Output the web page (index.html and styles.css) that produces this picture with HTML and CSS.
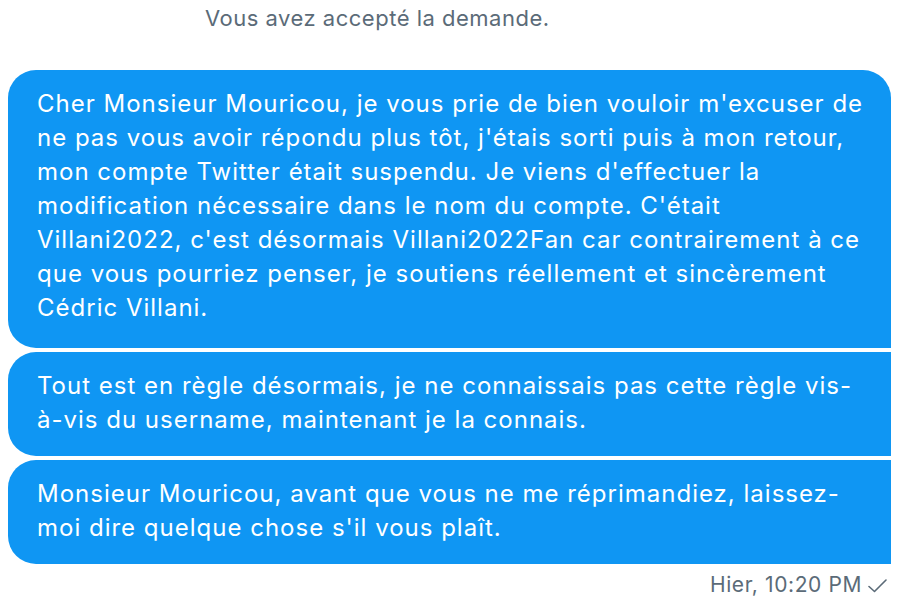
FILE: index.html
```html
<!DOCTYPE html>
<html lang="fr">

<head>
    <meta charset="UTF-8">
    <meta name="viewport" content="width=device-width, initial-scale=1.0">
    <title>Messages</title>
    <link rel="stylesheet" href="styles.css">
</head>

<body>
    <div class="conversation">
        <p class="notice">Vous avez accepté la demande.</p>

        <div class="messages">
            <div class="bubble first">
                Cher Monsieur Mouricou, je vous prie de bien vouloir m'excuser de<br>
                ne pas vous avoir répondu plus tôt, j'étais sorti puis à mon retour,<br>
                mon compte Twitter était suspendu. Je viens d'effectuer la<br>
                modification nécessaire dans le nom du compte. C'était<br>
                Villani2022, c'est désormais Villani2022Fan car contrairement à ce<br>
                que vous pourriez penser, je soutiens réellement et sincèrement<br>
                Cédric Villani.
            </div>
            <div class="bubble middle">
                Tout est en règle désormais, je ne connaissais pas cette règle vis-<br>
                à-vis du username, maintenant je la connais.
            </div>
            <div class="bubble last">
                Monsieur Mouricou, avant que vous ne me réprimandiez, laissez-<br>
                moi dire quelque chose s'il vous plaît.
            </div>
        </div>

        <p class="timestamp">
            <span>Hier, 10:20 PM</span>
            <svg class="check" width="19" height="14" viewBox="0 0 19 14">
                <polyline points="1,7.5 6.5,12.5 18,1" fill="none" stroke="#5b6b78" stroke-width="1.6" stroke-linecap="round" stroke-linejoin="round" />
            </svg>
        </p>
    </div>
</body>

</html>
```

FILE: styles.css
```css
body {
    margin: 0;
    background: #ffffff;
    font-family: Inter, "Liberation Sans", Arial, sans-serif;
}

.conversation {
    width: 900px;
}

.notice {
    margin: 5px 0 39px 205px;
    font-size: 22px;
    line-height: 26px;
    letter-spacing: 0.5px;
    color: #5b6b78;
}

.messages {
    display: flex;
    flex-direction: column;
    gap: 4px;
    margin: 0 9px 0 8px;
}

.bubble {
    background-color: #0f96f3;
    color: #ffffff;
    font-size: 24px;
    line-height: 34px;
    letter-spacing: 1px;
    padding: 17px 20px 19px 29px;
    white-space: nowrap;
}

.bubble.first {
    padding-bottom: 23px;
    border-radius: 28px 28px 0 28px;
}

.bubble.middle,
.bubble.last {
    border-radius: 28px 0 0 28px;
}

.timestamp {
    display: flex;
    justify-content: flex-end;
    align-items: center;
    gap: 6px;
    margin: 9px 13px 0 0;
    font-size: 21px;
    line-height: 24px;
    letter-spacing: 0.6px;
    color: #5b6b78;
}

.timestamp .check {
    margin-top: 1px;
}
```
